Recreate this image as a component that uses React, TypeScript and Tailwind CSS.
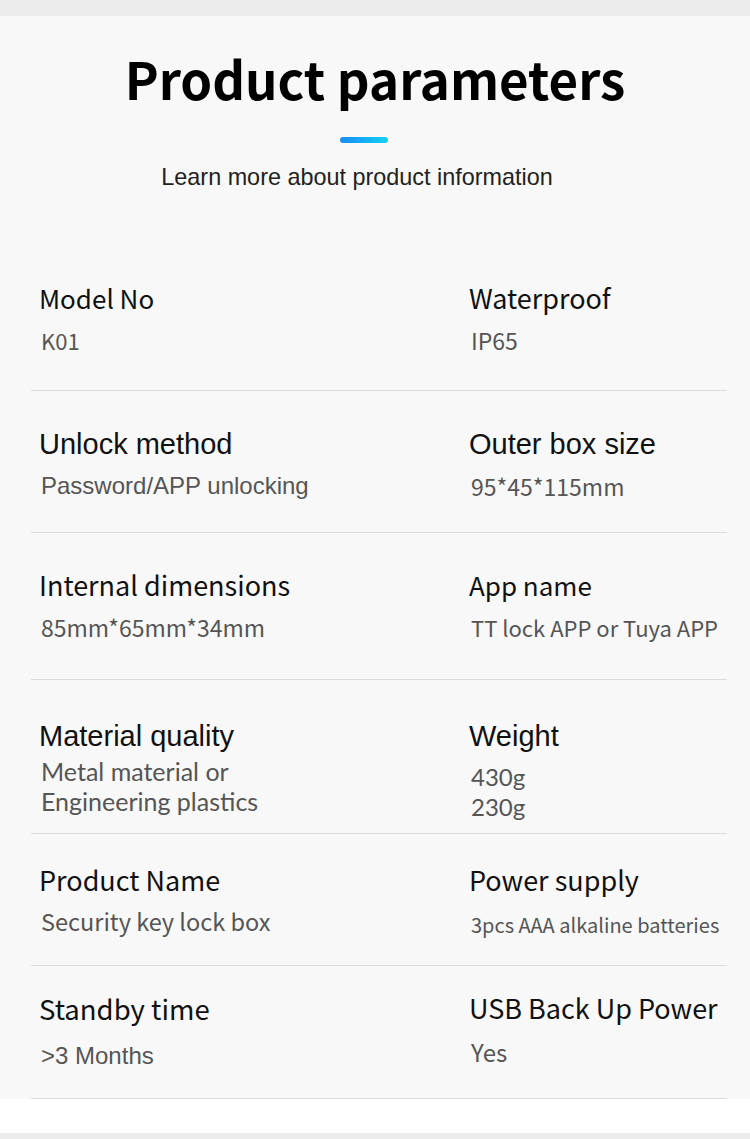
import React from 'react';

type Cell = { label: string; values: string[]; lf: string; vf: string; vm?: string };
type Row = { h: string; left: Cell; right: Cell };

const CJK = "font-['Noto_Sans_CJK_SC',sans-serif]";
const ARIAL = "font-['Liberation_Sans',Arial,sans-serif]";
const LATO = "font-['Lato',sans-serif]";

const rows: Row[] = [
  {
    h: 'h-[127px] pt-[16px]',
    left: { label: 'Model No', values: ['K01'], lf: `${CJK} text-[26px]`, vf: `${CJK} text-[22px]` },
    right: { label: 'Waterproof', values: ['IP65'], lf: `${CJK} text-[27px]`, vf: `${CJK} text-[23px]` },
  },
  {
    h: 'h-[142px] pt-[35px]',
    left: { label: 'Unlock method', values: ['Password/APP unlocking'], lf: `${ARIAL} text-[29px]`, vf: `${ARIAL} text-[24px]` },
    right: { label: 'Outer box size', values: ['95*45*115mm'], lf: `${ARIAL} text-[29px]`, vf: `${CJK} text-[23px]` },
  },
  {
    h: 'h-[147px] pt-[34px]',
    left: { label: 'Internal dimensions', values: ['85mm*65mm*34mm'], lf: `${CJK} text-[27px]`, vf: `${CJK} text-[23px]` },
    right: { label: 'App name', values: ['TT lock APP or Tuya APP'], lf: `${CJK} text-[26px]`, vf: `${CJK} text-[22px]` },
  },
  {
    h: 'h-[154px] pt-[38px]',
    left: {
      label: 'Material quality',
      values: ['Metal material or', 'Engineering plastics'],
      lf: `${ARIAL} text-[29px]`,
      vf: `${LATO} text-[25px]`,
      vm: 'mt-[2px]',
    },
    right: { label: 'Weight', values: ['430g', '230g'], lf: `${ARIAL} text-[29px]`, vf: `${LATO} text-[24px]`, vm: 'mt-[8px]' },
  },
  {
    h: 'h-[132px] pt-[28px]',
    left: { label: 'Product Name', values: ['Security key lock box'], lf: `${CJK} text-[27px]`, vf: `${CJK} text-[23.5px]`, vm: 'mt-[8px]' },
    right: {
      label: 'Power supply',
      values: ['3pcs AAA alkaline batteries'],
      lf: `${CJK} text-[27px]`,
      vf: `${CJK} text-[20px]`,
      vm: 'mt-[12px]',
    },
  },
  {
    h: 'h-[133px] pt-[24px]',
    left: { label: 'Standby time', values: ['>3 Months'], lf: `${CJK} text-[27.5px]`, vf: `${ARIAL} text-[24px]`, vm: 'mt-[15px]' },
    right: { label: 'USB Back Up Power', values: ['Yes'], lf: `${CJK} text-[27px]`, vf: `${CJK} text-[24px]`, vm: 'mt-[11px]' },
  },
];

function ParamCell({ cell }: { cell: Cell }) {
  return (
    <div className="flex flex-col">
      <div className={`${cell.lf} leading-[36px] text-[#111] whitespace-nowrap`}>{cell.label}</div>
      <p className={`${cell.vm ?? 'mt-[9px]'} ${cell.vf} pl-[2px] leading-[30px] text-[#555] whitespace-nowrap`}>
        {cell.values.map((v, i) => (
          <React.Fragment key={v}>
            {i > 0 && <br />}
            {v}
          </React.Fragment>
        ))}
      </p>
    </div>
  );
}

export default function App() {
  return (
    <div className="w-[750px] h-[1139px] bg-[#ececec] pt-[16px] overflow-hidden">
      <div className="bg-[#f8f8f8] h-[1083px] flex flex-col">
        <div className="flex flex-col items-center pt-[22px]">
          <h1 className={`${CJK} font-bold text-[51px] leading-[80px] text-black`}>Product parameters</h1>
          <div className="mt-[19px] mr-[22px] w-[48px] h-[6px] rounded-full bg-gradient-to-r from-[#1a8cf0] to-[#17d0f5]" />
          <p className={`${ARIAL} mt-[19px] mr-[36px] text-[23.4px] leading-[30px] text-[#222]`}>
            Learn more about product information
          </p>
        </div>

        <div className="mt-[72px] ml-[31px] mr-[23px] flex flex-col">
          {rows.map((r) => (
            <div key={r.left.label} className={`${r.h} grid grid-cols-[430px_1fr] border-b border-[#dcdcdc] pl-[8px]`}>
              <ParamCell cell={r.left} />
              <ParamCell cell={r.right} />
            </div>
          ))}
        </div>
      </div>
      <div className="h-[34px] bg-white" />
    </div>
  );
}
